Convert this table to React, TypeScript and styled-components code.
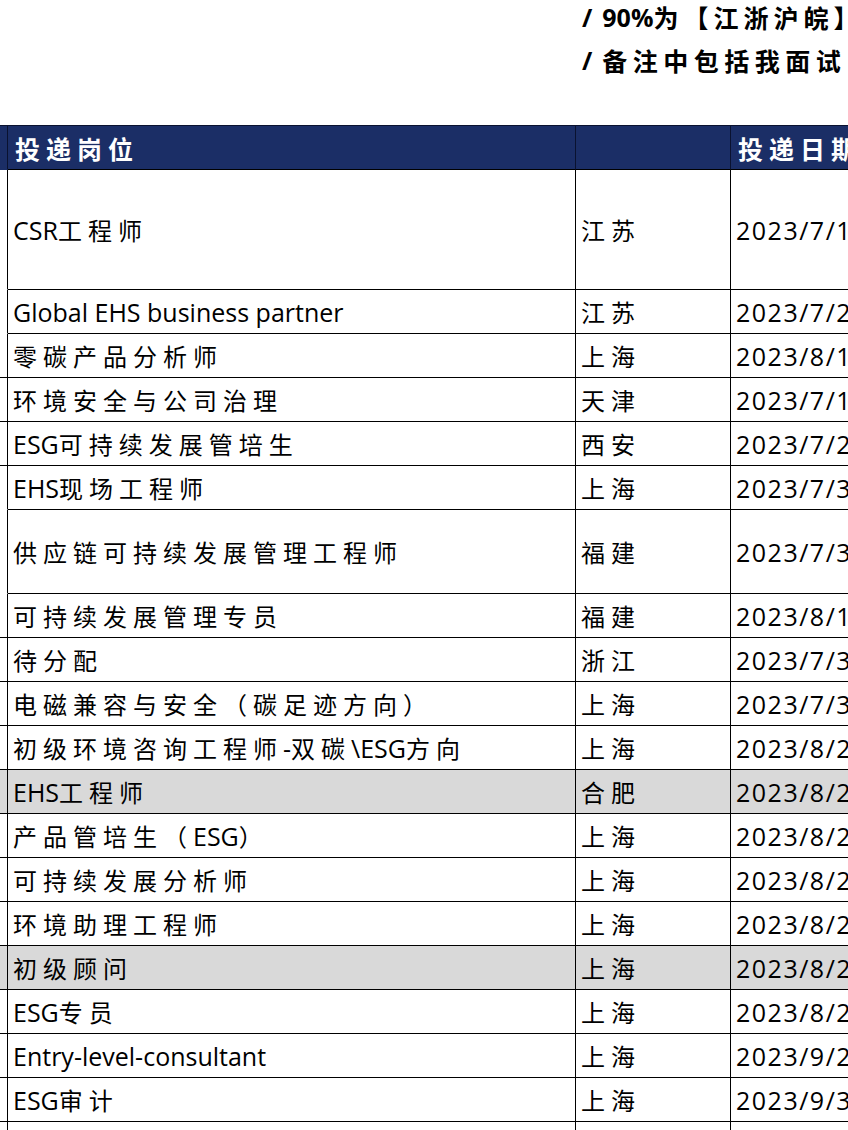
import React from "react";
import styled, { createGlobalStyle } from "styled-components";

const GlobalStyle = createGlobalStyle`
  html, body { margin: 0; padding: 0; background: #ffffff; overflow: hidden; }
  body { font-family: "Open Sans", "Noto Sans CJK SC", sans-serif; color: #000; }
`;

const COLS = "8px 568px 155px 269px";

const Page = styled.div`
  width: 1000px;
`;

const Notes = styled.div`
  display: grid;
  grid-template-columns: ${COLS};
  height: 125px;
`;

const NoteBlock = styled.div`
  grid-column: 3 / 5;
  padding: 0 0 0 6px;
  display: flex;
  flex-direction: column;
`;

const NoteLine = styled.div`
  height: 43px;
  display: flex;
  align-items: center;
  white-space: nowrap;
  font-family: "Open Sans", "Noto Sans CJK SC", sans-serif;
  font-weight: 700;
  font-size: 25px;
  &:first-child { margin-top: -5px; }
`;

const Slash = styled.span`
  margin-right: 10px;
`;

const Han = styled.span<{ $bold?: boolean; $size?: number; $gap?: number }>`
  font-family: "Noto Sans CJK SC", sans-serif;
  font-size: ${(p) => p.$size ?? 24}px;
  font-weight: ${(p) => (p.$bold ? 700 : 400)};
  letter-spacing: ${(p) => p.$gap ?? 6}px;
`;

const Table = styled.div`
  display: flex;
  flex-direction: column;
`;

const Row = styled.div<{ $h: number; $grey?: boolean; $head?: boolean }>`
  display: grid;
  grid-template-columns: ${COLS};
  height: ${(p) => p.$h}px;
  background: ${(p) => (p.$head ? "#1b2e66" : p.$grey ? "#d9d9d9" : "transparent")};
  color: ${(p) => (p.$head ? "#ffffff" : "#000000")};
  border-top: ${(p) => (p.$head ? "1px solid #0a1230" : "none")};
`;

const Strip = styled.div<{ $open?: boolean; $head?: boolean }>`
  border-right: 1px solid ${(p) => (p.$head ? "#0a1230" : "#000")};
  border-bottom: 1px solid ${(p) => (p.$open ? "transparent" : "#000")};
`;

const Cell = styled.div<{ $head?: boolean; $last?: boolean }>`
  display: flex;
  align-items: center;
  padding-left: 5px;
  white-space: nowrap;
  overflow: hidden;
  font-size: 25px;
  border-right: ${(p) => (p.$last ? "none" : `1px solid ${p.$head ? "#0a1230" : "#000"}`)};
  border-bottom: 1px solid #000;
`;

const HeadCell = styled(Cell)`
  padding-left: 7px;
`;

const DateCell = styled(Cell)`
  letter-spacing: 1.5px;
`;

const CJK = /([\u3000-\u303f\u4e00-\u9fff\uff00-\uffef]+)/;

function Mixed({ text, bold, size, gap }: { text: string; bold?: boolean; size?: number; gap?: number }) {
  const parts = text.split(CJK).filter((s) => s.length > 0);
  return (
    <>
      {parts.map((p, i) =>
        CJK.test(p) ? (
          <Han key={i} $bold={bold} $size={size} $gap={gap}>
            {p}
          </Han>
        ) : (
          <span key={i}>{p}</span>
        )
      )}
    </>
  );
}

type Item = { job: string; place: string; date: string; h?: number; grey?: boolean; open?: boolean };

const rows: Item[] = [
  { job: "CSR工程师", place: "江苏", date: "2023/7/1", h: 120, open: true },
  { job: "Global EHS business partner", place: "江苏", date: "2023/7/2", open: true },
  { job: "零碳产品分析师", place: "上海", date: "2023/8/1" },
  { job: "环境安全与公司治理", place: "天津", date: "2023/7/1" },
  { job: "ESG可持续发展管培生", place: "西安", date: "2023/7/2" },
  { job: "EHS现场工程师", place: "上海", date: "2023/7/3", open: true },
  { job: "供应链可持续发展管理工程师", place: "福建", date: "2023/7/3", h: 84, open: true },
  { job: "可持续发展管理专员", place: "福建", date: "2023/8/1" },
  { job: "待分配", place: "浙江", date: "2023/7/3" },
  { job: "电磁兼容与安全（碳足迹方向）", place: "上海", date: "2023/7/3" },
  { job: "初级环境咨询工程师-双碳\\ESG方向", place: "上海", date: "2023/8/2" },
  { job: "EHS工程师", place: "合肥", date: "2023/8/2", grey: true },
  { job: "产品管培生（ESG）", place: "上海", date: "2023/8/2" },
  { job: "可持续发展分析师", place: "上海", date: "2023/8/2" },
  { job: "环境助理工程师", place: "上海", date: "2023/8/2" },
  { job: "初级顾问", place: "上海", date: "2023/8/2", grey: true },
  { job: "ESG专员", place: "上海", date: "2023/8/2" },
  { job: "Entry-level-consultant", place: "上海", date: "2023/9/2" },
  { job: "ESG审计", place: "上海", date: "2023/9/3" },
  { job: "", place: "", date: "" },
];

export default function App() {
  return (
    <Page>
      <GlobalStyle />
      <Notes>
        <NoteBlock>
          <NoteLine>
            <Slash>/</Slash>
            <span>90%</span>
            <Mixed text="为【江浙沪皖】" bold size={25} gap={5} />
          </NoteLine>
          <NoteLine>
            <Slash>/</Slash>
            <Mixed text="备注中包括我面试" bold size={25} gap={5.5} />
          </NoteLine>
        </NoteBlock>
      </Notes>
      <Table>
        <Row $h={44} $head>
          <Strip $head $open />
          <HeadCell $head>
            <Mixed text="投递岗位" bold size={25} gap={6} />
          </HeadCell>
          <HeadCell $head />
          <HeadCell $head $last>
            <Mixed text="投递日期" bold size={25} gap={6} />
          </HeadCell>
        </Row>
        {rows.map((r, i) => (
          <Row key={i} $h={r.h ?? 44} $grey={r.grey}>
            <Strip $open={r.open} />
            <Cell>
              <Mixed text={r.job} />
            </Cell>
            <Cell>
              <Mixed text={r.place} />
            </Cell>
            <DateCell $last>{r.date}</DateCell>
          </Row>
        ))}
      </Table>
    </Page>
  );
}
